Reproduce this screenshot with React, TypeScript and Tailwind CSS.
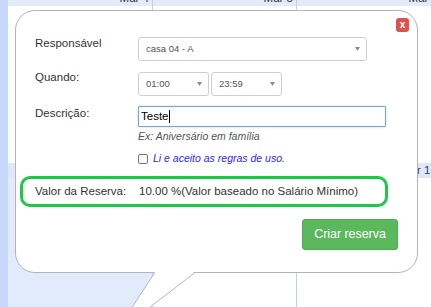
import clsx from 'clsx'

// Small grey caret used by the select boxes
function Caret() {
  return (
    <svg width="5" height="4" viewBox="0 0 5 4" className="shrink-0">
      <path d="M0 0h5L2.5 4z" fill="#8c8c8c" />
    </svg>
  )
}

function SelectBox({ value, className }: { value: string; className?: string }) {
  return (
    <div
      className={clsx(
        'flex h-[24px] items-center justify-between rounded-[3px] border border-[#cfcfcf] bg-white pl-[7px] pr-[6px] text-[9.5px] text-[#555]',
        className,
      )}
    >
      <span>{value}</span>
      <Caret />
    </div>
  )
}

interface ColumnProps {
  label: string
  width: string
  shaded?: boolean
  bandText?: string
}

// Calendar column sitting behind the popup
function Column({ label, width, shaded = false, bandText }: ColumnProps) {
  return (
    <div className={clsx('flex shrink-0 flex-col border-r border-[#bcd0f5]', width)}>
      <div className="h-[6px] overflow-hidden bg-[#e4ebf8] pr-[3px] text-right">
        <div className="-mt-[8px] text-[11.5px] leading-[12px] text-[#333]">{label}</div>
      </div>
      <div className="h-[157px]" />
      <div className="flex h-[15px] items-center bg-[#dfe8f9] text-[11.5px] text-[#444]">
        {bandText && <span className="ml-[104px] whitespace-nowrap">{bandText}</span>}
      </div>
      <div className={clsx('flex-1', shaded ? 'bg-[#e2ebfc]' : 'bg-white')} />
    </div>
  )
}

export default function App() {
  return (
    <div className="relative h-[307px] w-[431px] overflow-hidden bg-white font-['Liberation_Sans',Arial,sans-serif]">
      {/* background calendar */}
      <div className="flex h-full">
        <div className="w-[8px] shrink-0 bg-[#c7d8fb]" />
        <Column label="Mar 4" width="w-[145px]" shaded />
        <Column label="Mar 5" width="w-[144px]" />
        <Column label="Mar 6" width="w-[145px]" bandText="Mar 1" />
      </div>

      {/* popup */}
      <div className="absolute left-[15px] top-[10px] h-[263px] w-[403px] rounded-[20px] border border-[#b3b3b3] bg-white">
        <button className="absolute right-[8px] top-[7px] flex h-[14px] w-[13px] items-center justify-center rounded-[3px] bg-[#d9534f] text-[10px] font-bold leading-none text-white">
          x
        </button>

        <div className="flex flex-col px-[19px] pt-[26px] text-[11.5px] text-[#333]">
          <div className="flex items-start">
            <label className="-mt-[2px] w-[103px] leading-[16px]">Responsável</label>
            <SelectBox value="casa 04 - A" className="w-[229px]" />
          </div>

          <div className="mt-[11px] flex items-start">
            <label className="-mt-[3px] w-[103px] leading-[16px]">Quando:</label>
            <div className="flex gap-[2px]">
              <SelectBox value="01:00" className="w-[71px]" />
              <SelectBox value="23:59" className="w-[71px]" />
            </div>
          </div>

          <div className="mt-[10px] flex items-start">
            <label className="-mt-[1px] w-[103px] leading-[16px]">Descrição:</label>
            <div className="flex flex-col">
              <div className="flex h-[21px] w-[248px] items-center rounded-[1px] border border-[#72a5da] pl-[2px] text-[11.5px] text-black shadow-[0_0_2px_rgba(102,175,233,0.5)]">
                <span>Teste</span>
                <span className="h-[13px] w-px bg-black" />
              </div>
              <div className="mt-[2px] text-[10.5px] italic leading-[14px] text-[#555]">
                Ex: Aniversário em família
              </div>
              <div className="mt-[9px] flex h-[14px] items-center gap-[5px]">
                <span className="h-[10px] w-[10px] rounded-[2px] border border-[#777] bg-white" />
                <span className="text-[10.5px] italic text-[#2b2bef]">Li e aceito as regras de uso.</span>
              </div>
            </div>
          </div>

          <div className="-ml-[15px] mt-[10px] flex h-[31px] w-[368px] items-center rounded-[10px] border-[3px] border-[#1bc946] pl-[12px]">
            <span className="w-[104px]">Valor da Reserva:</span>
            <span>10.00 %(Valor baseado no Salário Mínimo)</span>
          </div>

          <div className="mt-[12px] flex justify-end">
            <button className="h-[31px] w-[96px] rounded-[3px] border border-[#4cae4c] bg-[#5cb85c] text-[12.4px] text-white">
              Criar reserva
            </button>
          </div>
        </div>
      </div>

      {/* speech-bubble tail */}
      <svg className="absolute left-0 top-0" width="431" height="307" viewBox="0 0 431 307">
        <polygon points="155,272 194,272 149.5,308 132,308" fill="#fff" />
        <line x1="154.5" y1="273" x2="132" y2="307.5" stroke="#b8b8b8" strokeWidth="1" />
        <line x1="194.5" y1="273" x2="149.5" y2="307.5" stroke="#b8b8b8" strokeWidth="1" />
      </svg>
    </div>
  )
}
